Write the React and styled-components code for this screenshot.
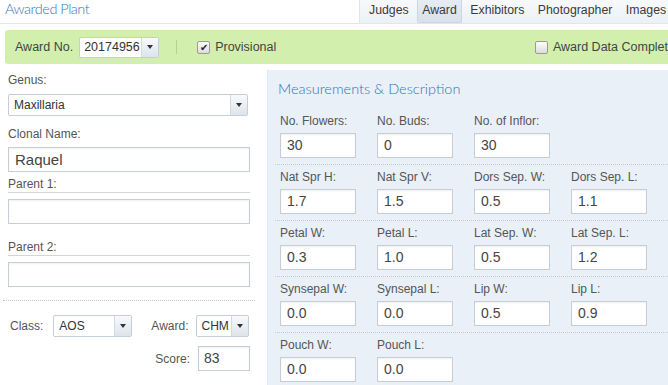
import styled, { createGlobalStyle } from 'styled-components';

const GlobalStyle = createGlobalStyle`
  body {
    margin: 0;
    background: #fff;
    font-family: "Liberation Sans", Arial, sans-serif;
    color: #444;
  }
`;

const Page = styled.div`
  width: 668px;
  height: 385px;
  overflow: hidden;
  background: #fff;
`;

const Header = styled.div`
  display: flex;
  height: 24px;
`;

const Title = styled.h1`
  flex: 1;
  margin: 0;
  padding-left: 5px;
  font-family: "Lato", "Open Sans", sans-serif;
  font-weight: 300;
  font-size: 14.5px;
  letter-spacing: -0.5px;
  line-height: 18px;
  color: #3c76b2;
  border-bottom: 1px solid #dfe6ee;
`;

const Tabs = styled.nav`
  display: flex;
  width: 304px;
  flex-shrink: 0;
  padding-left: 4px;
  gap: 3.5px;
  overflow: hidden;
  border-left: 1px solid #dfe4ea;
  border-bottom: 1px solid #dfe6ee;
  background: linear-gradient(#f7f9fb, #edf1f5);
`;

const Tab = styled.div`
  flex-shrink: 0;
  padding: 0 4px;
  height: 22px;
  line-height: 21px;
  font-size: 12.3px;
  color: #3b3b3b;
  border: 1px solid ${(p) => (p.$active ? '#ccd6e0' : 'transparent')};
  border-top: none;
  border-radius: 0 0 2px 2px;
  background: ${(p) => (p.$active ? 'linear-gradient(#e6ecf2, #d9e1ea)' : 'transparent')};
`;

const Toolbar = styled.div`
  display: flex;
  align-items: center;
  width: 690px;
  height: 34px;
  margin: 6px 0 0 5px;
  padding: 0 20px 0 10px;
  box-sizing: border-box;
  background: #d3efae;
  border-radius: 3px 0 0 3px;
  font-size: 12.5px;
  color: #444;
`;

const ToolLabel = styled.span`
  margin-right: 6px;
`;

const Divider = styled.span`
  width: 1px;
  height: 14px;
  margin: 0 20px 0 17px;
  background: #b7d095;
`;

const Check = styled.label`
  display: flex;
  align-items: center;
  gap: 5px;
  margin-left: ${(p) => (p.$right ? 'auto' : '0')};
  font-size: 12.5px;
  color: #444;
  white-space: nowrap;
`;

const Box = styled.span`
  width: 11px;
  height: 11px;
  border: 1px solid #9a9a9a;
  border-radius: 2px;
  background: linear-gradient(#fdfdfd, #dcdcdc);
  font-size: 10px;
  line-height: 11px;
  text-align: center;
  color: #222;
`;

const SelectBox = styled.div`
  display: flex;
  width: ${(p) => p.$w}px;
  height: ${(p) => p.$h || 22}px;
  box-sizing: border-box;
  border: 1px solid #c6cdd5;
  border-radius: 2px;
  background: #fff;
  font-size: ${(p) => p.$fs || 12}px;
  color: #333;
`;

const SelectValue = styled.span`
  flex: 1;
  padding-left: ${(p) => p.$pl}px;
  display: flex;
  align-items: center;
  overflow: hidden;
  white-space: nowrap;
`;

const SelectArrow = styled.span`
  width: 16px;
  flex-shrink: 0;
  display: flex;
  align-items: center;
  justify-content: center;
  border-left: 1px solid #d3d9e0;
  background: linear-gradient(#f8fafc, #dde4ec);

  &::after {
    content: '';
    border-left: 3.5px solid transparent;
    border-right: 3.5px solid transparent;
    border-top: 4px solid #333;
  }
`;

function Select({ value, w, h, fs, pl = 5 }) {
  return (
    <SelectBox $w={w} $h={h} $fs={fs}>
      <SelectValue $pl={pl}>{value}</SelectValue>
      <SelectArrow />
    </SelectBox>
  );
}

const Body = styled.div`
  display: flex;
`;

const LeftCol = styled.div`
  width: 267px;
  flex-shrink: 0;
  padding: 9px 0 0 8px;
  box-sizing: border-box;
`;

const FieldLabel = styled.div`
  font-size: 12px;
  line-height: 14px;
  color: #555;
  width: 242px;
  margin-top: ${(p) => p.$mt || 0}px;
  margin-bottom: ${(p) => p.$mb || 7}px;
  padding-bottom: ${(p) => (p.$line ? '1px' : '0')};
  border-bottom: ${(p) => (p.$line ? '1px solid #cfd5db' : 'none')};
`;

const TextInput = styled.div`
  width: ${(p) => p.$w || 242}px;
  height: 25px;
  box-sizing: border-box;
  border: 1px solid #c6cdd5;
  box-shadow: inset 0 1px 2px rgba(0, 0, 0, 0.06);
  background: #fff;
  padding-left: ${(p) => p.$pl || 6}px;
  font-size: ${(p) => p.$fs || 14}px;
  line-height: 23px;
  color: #444;
`;

const DottedRule = styled.div`
  margin: 13px 0 0 -5px;
  width: 252px;
  border-top: 1px dotted #c2c8ce;
`;

const InlineRow = styled.div`
  display: flex;
  align-items: center;
  justify-content: ${(p) => (p.$end ? 'flex-end' : 'flex-start')};
  width: 242px;
  margin-top: ${(p) => p.$mt}px;
  font-size: 12px;
  color: #555;
`;

const InlineLabel = styled.span`
  margin: ${(p) => p.$m};
`;

const Panel = styled.div`
  flex: 1;
  margin-top: 6px;
  height: 330px;
  padding: 10px 0 0 7px;
  box-sizing: border-box;
  background: #e9f0f8;
  border-left: 1px solid #e1e8f0;
`;

const PanelTitle = styled.h2`
  margin: 0 0 16px 3px;
  font-family: "Lato", "Open Sans", sans-serif;
  font-weight: 300;
  font-size: 14.5px;
  line-height: 18px;
  color: #3473b0;
`;

const MeasureRow = styled.div`
  display: flex;
  padding: 0 0 6px 5px;
  margin-bottom: 5px;
  border-bottom: ${(p) => (p.$last ? 'none' : '1px dotted #c2c9d1')};
`;

const Measure = styled.div`
  width: 97px;
  flex-shrink: 0;
`;

const MeasureLabel = styled.div`
  font-size: 12px;
  line-height: 14px;
  color: #555;
  margin-bottom: 5px;
`;

const rows = [
  [['No. Flowers:', '30'], ['No. Buds:', '0'], ['No. of Inflor:', '30']],
  [['Nat Spr H:', '1.7'], ['Nat Spr V:', '1.5'], ['Dors Sep. W:', '0.5'], ['Dors Sep. L:', '1.1']],
  [['Petal W:', '0.3'], ['Petal L:', '1.0'], ['Lat Sep. W:', '0.5'], ['Lat Sep. L:', '1.2']],
  [['Synsepal W:', '0.0'], ['Synsepal L:', '0.0'], ['Lip W:', '0.5'], ['Lip L:', '0.9']],
  [['Pouch W:', '0.0'], ['Pouch L:', '0.0']],
];

export default function App() {
  return (
    <Page>
      <GlobalStyle />
      <Header>
        <Title>Awarded Plant</Title>
        <Tabs>
          <Tab>Judges</Tab>
          <Tab $active>Award</Tab>
          <Tab>Exhibitors</Tab>
          <Tab>Photographer</Tab>
          <Tab>Images</Tab>
        </Tabs>
      </Header>

      <Toolbar>
        <ToolLabel>Award No.</ToolLabel>
        <Select value="20174956" w={80} h={21} fs={12.5} pl={4} />
        <Divider />
        <Check>
          <Box>✔</Box>
          Provisional
        </Check>
        <Check $right>
          <Box />
          Award Data Complete
        </Check>
      </Toolbar>

      <Body>
        <LeftCol>
          <FieldLabel>Genus:</FieldLabel>
          <Select value="Maxillaria" w={240} />
          <FieldLabel $mt={11} $mb={6}>Clonal Name:</FieldLabel>
          <TextInput $fs={15}>Raquel</TextInput>
          <FieldLabel $line $mt={5} $mb={6}>Parent 1:</FieldLabel>
          <TextInput />
          <FieldLabel $line $mt={16} $mb={6}>Parent 2:</FieldLabel>
          <TextInput />
          <DottedRule />
          <InlineRow $mt={14}>
            <InlineLabel $m="0 10px 0 2px">Class:</InlineLabel>
            <Select value="AOS" w={79} />
            <InlineLabel $m="0 8px 0 19px">Award:</InlineLabel>
            <Select value="CHM" w={53} fs={12} pl={4} />
          </InlineRow>
          <InlineRow $mt={9} $end>
            <InlineLabel $m="0 8px 0 0">Score:</InlineLabel>
            <TextInput $w={52} $pl={5}>83</TextInput>
          </InlineRow>
        </LeftCol>

        <Panel>
          <PanelTitle>Measurements &amp; Description</PanelTitle>
          {rows.map((row, i) => (
            <MeasureRow key={i} $last={i === rows.length - 1}>
              {row.map(([label, value]) => (
                <Measure key={label}>
                  <MeasureLabel>{label}</MeasureLabel>
                  <TextInput $w={76}>{value}</TextInput>
                </Measure>
              ))}
            </MeasureRow>
          ))}
        </Panel>
      </Body>
    </Page>
  );
}
